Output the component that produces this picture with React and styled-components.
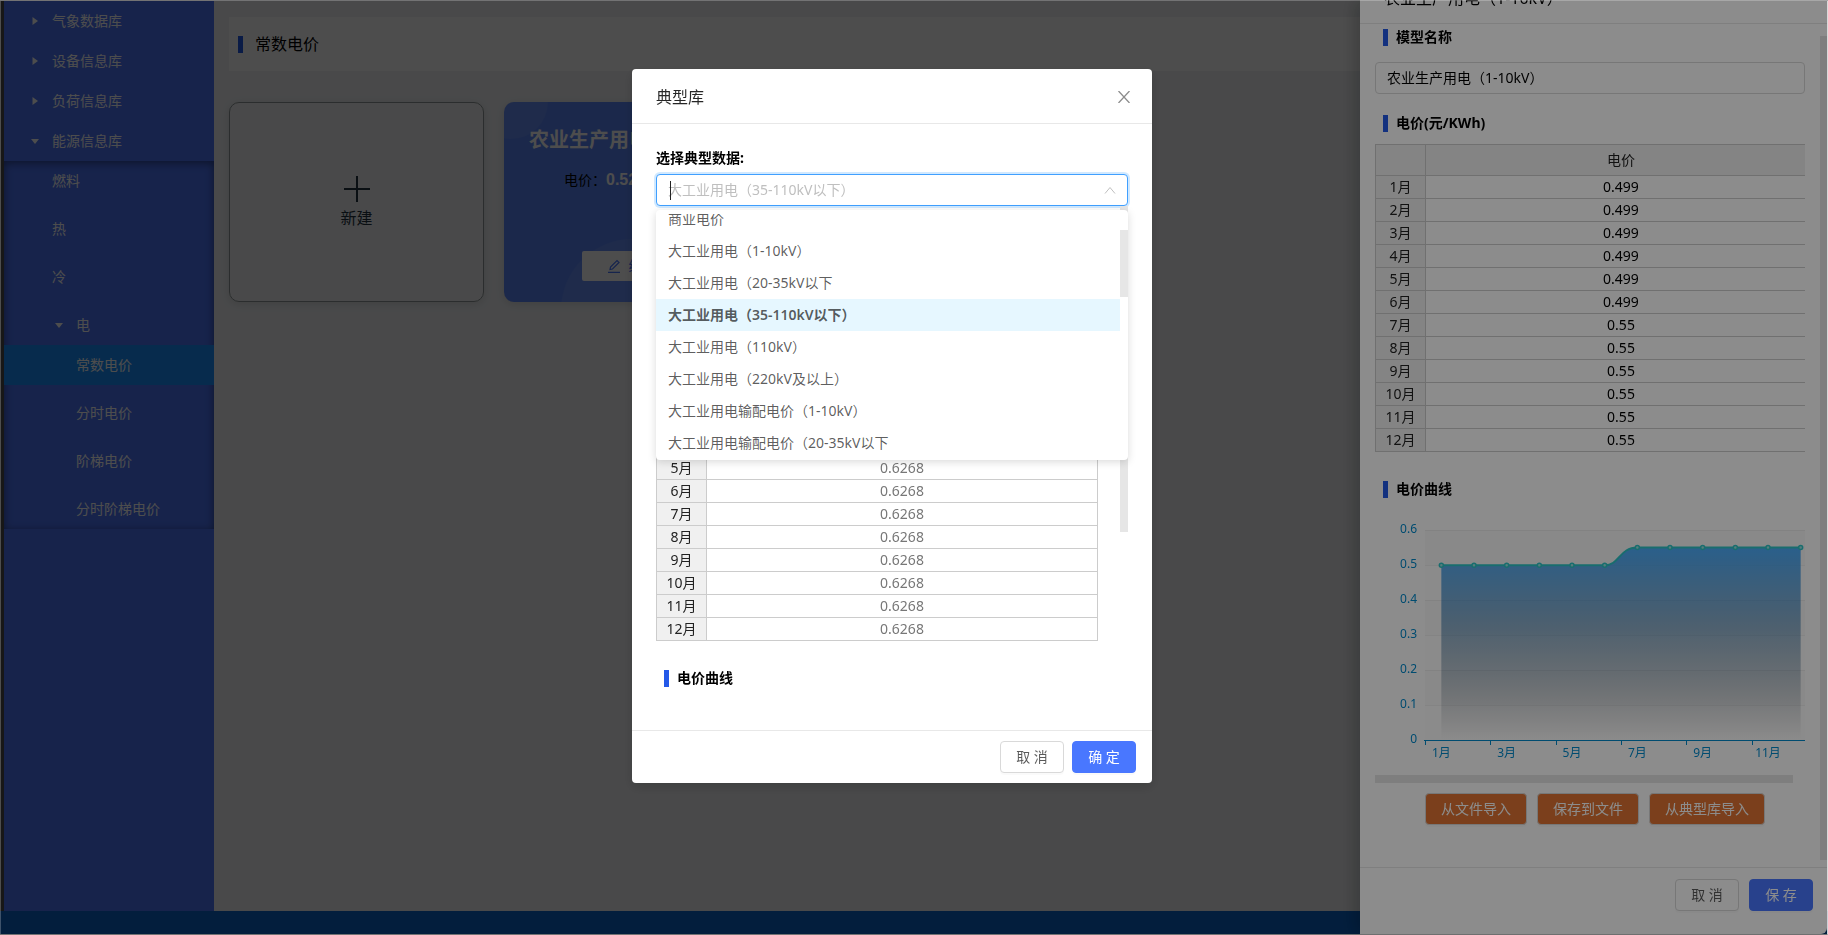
import React, { useEffect, useRef } from 'react';
import styled, { createGlobalStyle } from 'styled-components';

const fontStack = '"Noto Sans", "Noto Sans CJK SC", sans-serif';

const GlobalStyle = createGlobalStyle`
  *, *::before, *::after { box-sizing: border-box; }
  body {
    margin: 0;
    font-family: ${fontStack};
    font-size: 14px;
    line-height: 22px;
    color: #000;
    background: #f0f2f5;
  }
  button, input { font: inherit; }
  ul { list-style: none; margin: 0; padding: 0; }
  h1, h2, h3, p { margin: 0; font-size: 14px; font-weight: 400; }
`;

/* ---------- page ---------- */

const Page = styled.div`
  display: flex;
  flex-direction: column;
  height: 100vh;
  overflow: hidden;
  padding: 1px 0;
`;

const Columns = styled.div`
  display: flex;
  flex: 1;
  min-height: 0;
`;

const Sidebar = styled.nav`
  width: 214px;
  flex: none;
  border-left: 4px solid #4c4c4c;
  background: #4c74f8;
`;

const MenuItem = styled.a`
  display: flex;
  align-items: center;
  gap: 12px;
  height: 40px;
  margin-bottom: ${(p) => (p.$leaf ? 8 : 0)}px;
  padding-left: ${(p) => p.$indent}px;
  color: #fff;
  text-decoration: none;
  background: ${(p) => (p.$active ? '#1890ff' : 'transparent')};

  svg { flex: none; fill: currentColor; }
`;

const SubMenu = styled.div`
  box-shadow: inset 0 2px 8px rgba(0, 0, 0, 0.45);

  & > a:last-child { margin-bottom: 0; }
`;

const Main = styled.main`
  flex: 1;
  min-width: 0;
  padding: 16px 15px;
`;

const PageHeader = styled.header`
  display: flex;
  align-items: center;
  height: 54px;
  padding-left: 9px;
  margin-bottom: 31px;
  background: #fff;
`;

const Mark = styled.span`
  width: 5px;
  height: 17px;
  flex: none;
  background: #2459e8;
`;

const PageTitle = styled.h1`
  padding-left: 12px;
  font-size: 16px;
`;

const CardGrid = styled.div`
  display: grid;
  grid-template-columns: repeat(auto-fill, 255px);
  gap: 20px;
`;

const NewCard = styled.button`
  display: flex;
  flex-direction: column;
  align-items: center;
  justify-content: center;
  gap: 5px;
  height: 200px;
  padding: 0;
  border: 1px solid #8f9697;
  border-radius: 10px;
  background: transparent;
  color: #243340;
  font-size: 16px;
  box-shadow: 0 2px 8px rgba(0, 0, 0, 0.12);
`;

const PriceCard = styled.article`
  position: relative;
  display: flex;
  flex-direction: column;
  height: 200px;
  padding: 26px 0 21px;
  border-radius: 10px;
  overflow: hidden;
  background: #5b86f7;
  box-shadow: 0 2px 8px rgba(0, 0, 0, 0.12);
`;

const CardArt = styled.svg`
  position: absolute;
  inset: 0;
`;

const CardTitle = styled.h2`
  position: relative;
  padding-left: 25px;
  white-space: nowrap;
  font-size: 20px;
  line-height: 24px;
  font-weight: 700;
  color: #fff;
`;

const CardPrice = styled.p`
  position: relative;
  margin-top: 17px;
  padding-left: 60px;

  b {
    font-family: "Liberation Sans", sans-serif;
    font-size: 16px;
    color: #fff;
  }
`;

const EditButton = styled.button`
  position: relative;
  display: flex;
  align-items: center;
  justify-content: center;
  gap: 8px;
  width: 100px;
  height: 30px;
  margin: auto auto 0;
  padding: 0;
  border: 0;
  border-radius: 2px;
  background: #fff;
  color: #4977ff;
`;

const PageFooter = styled.footer`
  height: 23px;
  flex: none;
  background: #0a64ca;
`;

/* ---------- shared controls ---------- */

const Button = styled.button`
  height: 32px;
  padding: 0 15px;
  border: 1px solid ${(p) => (p.$kind === 'primary' ? '#4977ff' : '#d9d9d9')};
  border-radius: 4px;
  background: ${(p) => ({ primary: '#4977ff', accent: '#e07433' })[p.$kind] || '#fff'};
  color: ${(p) => (p.$kind ? '#fff' : 'rgba(0, 0, 0, 0.65)')};
  white-space: pre;
  box-shadow: 0 2px 0 rgba(0, 0, 0, 0.02);
`;

const DialogButton = styled(Button)`
  width: 64px;
  padding: 0;
`;

const SectionTitle = styled.h3`
  display: flex;
  align-items: center;
  gap: 8px;
  padding-left: 8px;
  height: 22px;
  font-weight: 700;
`;

const ScrollThumb = styled.span`
  position: absolute;
  background: #e6e6e6;
`;

const PriceTable = styled.table`
  width: 442px;
  table-layout: fixed;
  border-collapse: collapse;
  text-align: center;

  th, td {
    height: 23px;
    padding: 0;
    border: 1px solid #ccc;
    font-weight: 400;
    line-height: 22px;
  }
  thead th { height: 31px; }
  th { background: #f0f0f0; color: #222; }
  th:first-child { width: 50px; }
  td { color: ${(p) => (p.$dim ? '#777' : '#000')}; }
`;

/* ---------- drawer ---------- */

const Mask = styled.div`
  position: fixed;
  inset: 0;
  background: rgba(0, 0, 0, 0.45);
`;

const Drawer = styled.aside`
  position: fixed;
  top: 0;
  right: 1px;
  bottom: 1px;
  width: 467px;
  display: flex;
  flex-direction: column;
  border-radius: 0 0 6px 0;
  background: #fff;
  box-shadow: -6px 0 16px rgba(0, 0, 0, 0.2);
`;

const DrawerHeader = styled.header`
  display: flex;
  align-items: flex-end;
  height: 24px;
  flex: none;
  padding: 0 24px 14px;
  border-bottom: 1px solid #e8e8e8;
  font-size: 16px;
`;

const DrawerBody = styled.div`
  position: relative;
  flex: 1;
  min-height: 0;
  padding: 2px 22px 0 15px;
  overflow: hidden;
`;

const NameInput = styled.input`
  display: block;
  width: 100%;
  height: 32px;
  margin: 14px 0 18px;
  padding: 0 11px 2px;
  border: 1px solid #d9d9d9;
  border-radius: 4px;
  background: #fff;
  color: #000;
`;

const TableClip = styled.div`
  margin: 10px 0 26px;
  overflow: hidden;
`;

const ChartClip = styled.div`
  position: relative;
  margin-top: 17px;
  height: 266px;
  overflow: hidden;

  svg { display: block; font-size: 12px; }
`;

const ImportBar = styled.div`
  display: flex;
  gap: 10px;
  margin-top: 10px;
  padding-left: 50px;
`;

const DrawerFooter = styled.footer`
  display: flex;
  justify-content: flex-end;
  gap: 10px;
  flex: none;
  height: 67px;
  padding: 11px 14px;
  border-top: 1px solid #e8e8e8;
`;

/* ---------- modal ---------- */

const ModalWrap = styled.div`
  position: fixed;
  inset: 0;
  display: flex;
  justify-content: center;
  align-items: flex-start;
  padding: 69px 44px 0 0;
`;

const Modal = styled.section`
  width: 520px;
  border-radius: 4px;
  background: #fff;
  box-shadow: 0 4px 12px rgba(0, 0, 0, 0.15);
`;

const ModalHeader = styled.header`
  display: flex;
  align-items: center;
  justify-content: space-between;
  height: 55px;
  padding: 2px 22px 0 24px;
  border-bottom: 1px solid #e8e8e8;

  h2 { font-size: 16px; color: rgba(0, 0, 0, 0.85); }
`;

const CloseButton = styled.button`
  display: flex;
  padding: 0;
  border: 0;
  background: none;
  color: #8c8c8c;
`;

const ModalBody = styled.div`
  padding: 23px 24px 24px;
`;

const FieldLabel = styled.label`
  display: block;
  margin-bottom: 5px;
  font-weight: 700;
`;

const SelectBox = styled.div`
  position: relative;
`;

const SelectInput = styled.input`
  display: block;
  width: 100%;
  height: 32px;
  padding: 0 30px 2px 11px;
  border: 1px solid #40a0ff;
  border-radius: 4px;
  outline: none;
  background: #fff;
  box-shadow: 0 0 0 2px rgba(24, 144, 255, 0.2);

  &::placeholder { color: #bfbfbf; opacity: 1; }
`;

const Caret = styled.span`
  position: absolute;
  left: 14px;
  top: 7px;
  width: 1px;
  height: 19px;
  background: #222;
`;

const SelectArrow = styled.svg`
  position: absolute;
  right: 12px;
  top: 12px;
  color: #bfbfbf;
`;

const Dropdown = styled.div`
  position: absolute;
  z-index: 2;
  top: 36px;
  left: 0;
  right: 0;
  padding: 4px 0;
  border-radius: 4px;
  background: #fff;
  box-shadow: 0 2px 8px rgba(0, 0, 0, 0.15);
`;

const OptionList = styled.ul`
  height: 242px;
  padding-right: 8px;
  overflow: hidden;
`;

const Option = styled.li`
  height: 32px;
  padding: 5px 12px;
  color: rgba(0, 0, 0, 0.65);
  font-weight: ${(p) => (p.$selected ? 600 : 400)};
  background: ${(p) => (p.$selected ? '#e6f7ff' : '#fff')};
`;

const ModalScroll = styled.div`
  position: relative;
  height: 500px;
  padding-top: 95px;
  overflow: hidden;
`;

const ModalTableWrap = styled.div`
  margin: 10px 0 26px;
`;

const ModalFooter = styled.footer`
  display: flex;
  justify-content: flex-end;
  gap: 8px;
  padding: 10px 16px;
  border-top: 1px solid #e8e8e8;
`;

const WindowFrame = styled.div`
  position: fixed;
  inset: 0;
  border: 1px solid rgba(255, 255, 255, 0.24);
  border-right-color: rgba(255, 255, 255, 0.8);
  pointer-events: none;
`;

/* ---------- data ---------- */

const drawerPrices = [0.499, 0.499, 0.499, 0.499, 0.499, 0.499, 0.55, 0.55, 0.55, 0.55, 0.55, 0.55];
const libraryPrices = Array(12).fill(0.6268);

const options = [
  '商业电价',
  '大工业用电（1-10kV）',
  '大工业用电（20-35kV以下',
  '大工业用电（35-110kV以下）',
  '大工业用电（110kV）',
  '大工业用电（220kV及以上）',
  '大工业用电输配电价（1-10kV）',
  '大工业用电输配电价（20-35kV以下',
];
const selectedOption = options[3];

const Arrow = ({ open }) => (
  <svg width="10" height="10" viewBox="0 0 10 10" aria-hidden="true">
    <path d={open ? 'M1 3h8L5 8z' : 'M2.500 1v8L8 5z'} />
  </svg>
);

function Prices({ values, dim }) {
  return (
    <PriceTable $dim={dim}>
      <thead>
        <tr><th /><th scope="col">电价</th></tr>
      </thead>
      <tbody>
        {values.map((v, i) => (
          <tr key={i}><th scope="row">{i + 1}月</th><td>{v}</td></tr>
        ))}
      </tbody>
    </PriceTable>
  );
}

function PriceChart() {
  const left = 50;
  const base = 223;
  const step = 35;
  const band = 392 / 12;
  const x = (i) => left + band * (i + 0.5);
  const y = (v) => base - (v / 0.6) * step * 6;
  const pts = drawerPrices.map((v, i) => [x(i), y(v)]);
  const line = pts
    .map(([px, py], i) => {
      if (i === 0) return `M${px} ${py}`;
      const [qx, qy] = pts[i - 1];
      return qy === py ? `L${px} ${py}` : `C${qx + 15} ${qy} ${px - 18} ${py} ${px} ${py}`;
    })
    .join(' ');
  return (
    <svg width="442" height="246" role="img" aria-label="电价曲线">
      <defs>
        <linearGradient id="area" x1="0" y1="0" x2="0" y2="1">
          <stop offset="0" stopColor="#229cff" stopOpacity="0.8" />
          <stop offset="1" stopColor="#000" stopOpacity="0" />
        </linearGradient>
      </defs>
      {[0, 1, 2, 3, 4, 5].map((i) => (
        <rect key={i} x={left} y={13 + i * step} width="392" height={step} fill={i % 2 ? '#fefefe' : '#fafafa'} />
      ))}
      {[0, 1, 2, 3, 4, 5].map((i) => (
        <rect key={i} x={left} y={13 + i * step} width="392" height="1" fill="rgba(0,0,0,0.05)" />
      ))}
      <path d={`${line} L${x(11)} ${base} L${x(0)} ${base}Z`} fill="url(#area)" />
      <path d={line} fill="none" stroke="#2ec7c9" strokeWidth="2" />
      {pts.map(([px, py]) => (
        <circle key={px} cx={px} cy={py} r="2" fill="#9fe3e4" stroke="#2ec7c9" strokeWidth="1.500" />
      ))}
      <rect x={left - 1} y={base} width="393" height="1" fill="#008acd" />
      {[0, 2, 4, 6, 8, 10].map((i) => (
        <React.Fragment key={i}>
          <rect x={Math.round(left + band * i)} y={base} width="1" height="5" fill="#008acd" />
          <text x={x(i)} y="240" textAnchor="middle" fill="#008acd">{i + 1}月</text>
        </React.Fragment>
      ))}
      {['0.6', '0.5', '0.4', '0.3', '0.2', '0.1', '0'].map((t, i) => (
        <text key={t} x="42" y={16 + i * step} textAnchor="end" fill="#008acd">{t}</text>
      ))}
    </svg>
  );
}

function TypicalSelect() {
  const listRef = useRef(null);
  useEffect(() => {
    listRef.current.scrollTop = 11;
  }, []);
  return (
    <SelectBox>
      <SelectInput
        id="typical"
        role="combobox"
        aria-expanded="true"
        aria-controls="typical-list"
        placeholder={selectedOption}
      />
      <Caret />
      <SelectArrow width="12" height="8" viewBox="0 0 12 8" fill="none" stroke="currentColor">
        <path d="M1 7.500 6 1.500 11 7.500" />
      </SelectArrow>
      <Dropdown>
        <OptionList id="typical-list" role="listbox" ref={listRef}>
          {options.map((o) => (
            <Option key={o} role="option" aria-selected={o === selectedOption} $selected={o === selectedOption}>
              {o}
            </Option>
          ))}
        </OptionList>
        <ScrollThumb style={{ right: 0, top: 20, width: 8, height: 67 }} />
      </Dropdown>
    </SelectBox>
  );
}

export default function App() {
  return (
    <>
      <GlobalStyle />
      <Page>
        <Columns>
          <Sidebar>
            <MenuItem href="#" $indent={26}><Arrow />气象数据库</MenuItem>
            <MenuItem href="#" $indent={26}><Arrow />设备信息库</MenuItem>
            <MenuItem href="#" $indent={26}><Arrow />负荷信息库</MenuItem>
            <MenuItem href="#" $indent={26}><Arrow open />能源信息库</MenuItem>
            <SubMenu>
              <MenuItem href="#" $indent={48} $leaf>燃料</MenuItem>
              <MenuItem href="#" $indent={48} $leaf>热</MenuItem>
              <MenuItem href="#" $indent={48} $leaf>冷</MenuItem>
              <MenuItem href="#" $indent={50}><Arrow open />电</MenuItem>
              <MenuItem href="#" $indent={72} $leaf $active>常数电价</MenuItem>
              <MenuItem href="#" $indent={72} $leaf>分时电价</MenuItem>
              <MenuItem href="#" $indent={72} $leaf>阶梯电价</MenuItem>
              <MenuItem href="#" $indent={72} $leaf>分时阶梯电价</MenuItem>
            </SubMenu>
          </Sidebar>
          <Main>
            <PageHeader><Mark /><PageTitle>常数电价</PageTitle></PageHeader>
            <CardGrid>
              <NewCard>
                <svg width="26" height="26" viewBox="0 0 26 26" fill="currentColor" aria-hidden="true">
                  <path d="M12 0h2v12h12v2H14v12h-2V14H0v-2h12z" />
                </svg>
                新建
              </NewCard>
              <PriceCard>
                <CardArt width="255" height="200" viewBox="0 0 255 200" fill="#fff" fillOpacity="0.07" aria-hidden="true">
                  <circle cx="7" cy="0" r="37" />
                  <circle cx="128" cy="208" r="71" />
                </CardArt>
                <CardTitle>农业生产用电</CardTitle>
                <CardPrice>电价：<b>0.52</b></CardPrice>
                <EditButton>
                  <svg width="14" height="14" viewBox="0 0 14 14" fill="none" stroke="currentColor" strokeWidth="1.200" aria-hidden="true">
                    <path d="M1 13.400h12M3 10.500l.5-2.500L10 1.500l2 2L5.500 10z" />
                  </svg>
                  编辑
                </EditButton>
              </PriceCard>
            </CardGrid>
          </Main>
        </Columns>
        <PageFooter />
      </Page>

      <Mask />
      <Drawer>
        <DrawerHeader>农业生产用电（1-10kV）</DrawerHeader>
        <DrawerBody>
          <SectionTitle><Mark /><label htmlFor="model-name">模型名称</label></SectionTitle>
          <NameInput id="model-name" defaultValue="农业生产用电（1-10kV）" />
          <SectionTitle><Mark />电价(元/KWh)</SectionTitle>
          <TableClip><Prices values={drawerPrices} /></TableClip>
          <SectionTitle><Mark />电价曲线</SectionTitle>
          <ChartClip>
            <PriceChart />
            <ScrollThumb style={{ left: 0, right: 12, bottom: 0, height: 8 }} />
          </ChartClip>
          <ImportBar>
            <Button $kind="accent">从文件导入</Button>
            <Button $kind="accent">保存到文件</Button>
            <Button $kind="accent">从典型库导入</Button>
          </ImportBar>
          <ScrollThumb style={{ right: 0, top: 12, bottom: 7, width: 7 }} />
        </DrawerBody>
        <DrawerFooter>
          <DialogButton>取 消</DialogButton>
          <DialogButton $kind="primary">保 存</DialogButton>
        </DrawerFooter>
      </Drawer>

      <Mask />
      <ModalWrap>
        <Modal role="dialog" aria-labelledby="modal-title">
          <ModalHeader>
            <h2 id="modal-title">典型库</h2>
            <CloseButton aria-label="关闭">
              <svg width="12" height="12" viewBox="0 0 12 12" fill="none" stroke="currentColor" strokeWidth="1.300">
                <path d="M.5 0 11.500 12M11.500 0 .5 12" />
              </svg>
            </CloseButton>
          </ModalHeader>
          <ModalBody>
            <FieldLabel htmlFor="typical">选择典型数据:</FieldLabel>
            <TypicalSelect />
            <ModalScroll>
              <SectionTitle><Mark />电价(元/KWh)</SectionTitle>
              <ModalTableWrap><Prices values={libraryPrices} dim /></ModalTableWrap>
              <SectionTitle><Mark />电价曲线</SectionTitle>
              <ScrollThumb style={{ right: 0, top: 0, width: 8, height: 326 }} />
            </ModalScroll>
          </ModalBody>
          <ModalFooter>
            <DialogButton>取 消</DialogButton>
            <DialogButton $kind="primary">确 定</DialogButton>
          </ModalFooter>
        </Modal>
      </ModalWrap>
      <WindowFrame />
    </>
  );
}
